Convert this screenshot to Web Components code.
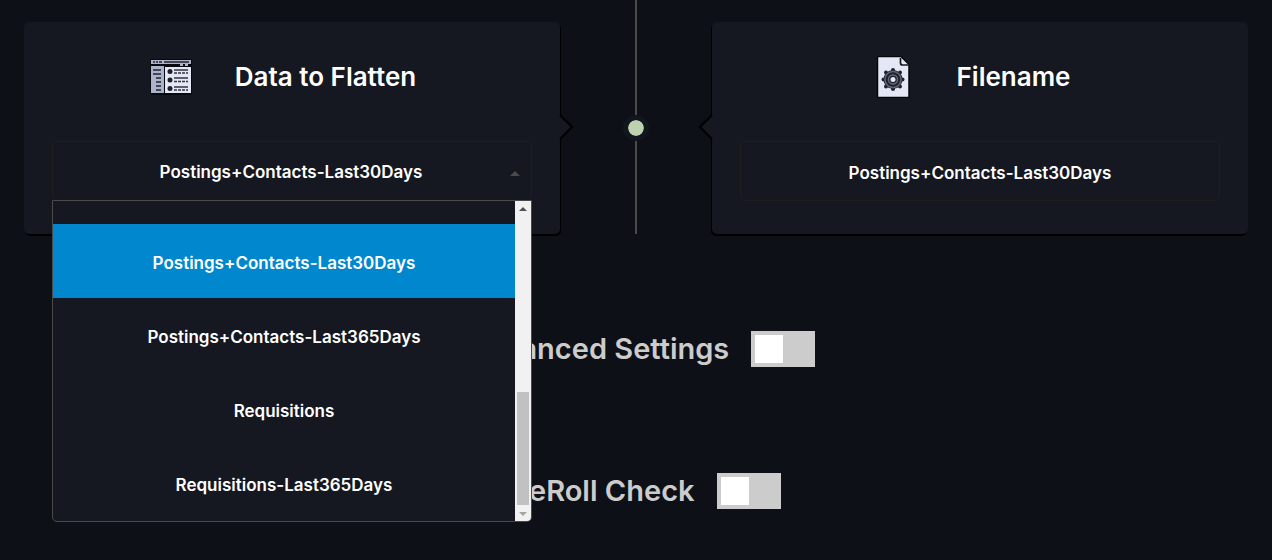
<!DOCTYPE html>
<html lang="en">
<head>
<meta charset="utf-8">
<title>Flatten data</title>
<style>
body { margin: 0; min-height: 100vh; background: #0d1017; color: #fff; font-family: Inter, "Liberation Sans", sans-serif; font-weight: 600; overflow-x: hidden; }
</style>
</head>
<body>
<flatten-page></flatten-page>
<script>
const define = (name, html, setup) => customElements.define(name, class extends HTMLElement {
  constructor() {
    super();
    this.attachShadow({ mode: 'open' }).innerHTML = html;
  }
  connectedCallback() { if (setup) setup(this, this.shadowRoot); }
});

define('columns-icon', `
<style>:host { display: block; width: 42px; height: 42px; } svg { display: block; }</style>
<svg width="42" height="42" viewBox="0 0 42 42" aria-hidden="true">
  <rect x="0" y="3" width="42" height="36" rx="2" fill="#08090e"/>
  <rect x="1" y="4" width="40" height="4" fill="#aeb3c5"/>
  <path d="M3 6h2m1 0h2m1 0h3M14 6h25" stroke="#20222b" stroke-width="1.5"/>
  <path d="M30 9h3m2 0h3" stroke="#aeb3c5" stroke-width="2"/>
  <rect x="1" y="10" width="13" height="27" fill="#aab2cc"/>
  <path d="M15 11h26v26H15z" fill="#e3e7f6"/>
  <path d="M3 14h8M3 18h8M6 22h5M6 26h5M6 30h5M6 34h5" stroke="#20222b" stroke-width="1.5"/>
  <g fill="#20222b"><circle cx="20" cy="15.500" r="2.500"/><circle cx="20" cy="24" r="2.500"/><circle cx="20" cy="32.500" r="2.500"/></g>
  <path d="M24 14h14M24 22h14M24 31h14" stroke="#33353f" stroke-width="1.500"/>
  <path d="M24 17h14M24 25.500h14M24 34h14" stroke="#33353f" stroke-width="1.500" stroke-dasharray="3 1"/>
</svg>`);

define('file-icon', `
<style>:host { display: block; width: 42px; height: 42px; } svg { display: block; }</style>
<svg width="42" height="42" viewBox="0 0 42 42" aria-hidden="true">
  <path d="M5.500 .5H29l8 8V41.500H5.500z" fill="#e4e8f6" stroke="#050609" stroke-width="1.500"/>
  <path d="M28.500 2v5q0 2 2 2h6" fill="none" stroke="#14161d" stroke-width="1.700"/>
  <g fill="#20222b">
    <circle cx="21" cy="23.500" r="9.500"/>
    <circle cx="21" cy="14" r="2"/><circle cx="21" cy="33" r="2"/><circle cx="11.500" cy="23.500" r="2"/><circle cx="30.500" cy="23.500" r="2"/>
    <circle cx="14" cy="16.500" r="2"/><circle cx="28" cy="16.500" r="2"/><circle cx="14" cy="30.500" r="2"/><circle cx="28" cy="30.500" r="2"/>
  </g>
  <circle cx="21" cy="23.500" r="8" fill="none" stroke="#626779" stroke-width="1.500"/>
  <circle cx="21" cy="23.500" r="4.500" fill="none" stroke="#626779" stroke-width="1.500"/>
  <circle cx="21" cy="23.500" r="2.500" fill="#e4e8f6"/>
</svg>`);

define('step-card', `
<style>
  :host { display: block; position: relative; box-sizing: border-box; height: 212px; padding: 32px 28px 0; background: #151820; border-radius: 5px; box-shadow: 1px 2px 0 #000; }
  :host([arrow="left"]) { box-shadow: -1px 2px 0 #000; }
  header { display: flex; align-items: center; justify-content: center; gap: 43px; height: 46px; padding-right: 18px; }
  h2 { margin: 0; font-size: 26px; line-height: 32px; font-weight: 600; }
  .body { padding-top: 41px; }
  .arrow { position: absolute; top: 91px; right: -14px; }
  :host([arrow="left"]) .arrow { right: auto; left: -14px; transform: scaleX(-1); }
</style>
<header><slot name="icon"></slot><h2><slot name="title"></slot></h2></header>
<div class="body"><slot></slot></div>
<svg class="arrow" width="16" height="28" viewBox="0 0 16 28" aria-hidden="true"><path d="M0 2H2L14 14 2 26H0z" fill="#151820"/><path d="M2 2 14 14 2 26" fill="none" stroke="#000" stroke-width="2"/></svg>`);

define('time-line', `
<style>
  :host { display: flex; flex-direction: column; align-items: center; }
  .line { width: 2px; background: #4a4a4a; }
  .top { height: 115px; }
  .bottom { flex: 1; }
  .dot { box-sizing: border-box; width: 26px; height: 26px; border: 5px solid #13161e; border-radius: 50%; background: #bdd3b0; background-clip: padding-box; }
</style>
<div class="line top"></div><div class="dot"></div><div class="line bottom"></div>`);

define('data-select', `
<style>
  :host { display: block; position: relative; }
  select { display: block; box-sizing: border-box; width: 100%; height: 60px; padding: 2px 2px 0 0; appearance: none; border: 1px solid #1f1e1f; border-radius: 5px; background: #151820; color: #fff; font: 600 17px/24px Inter, "Liberation Sans", sans-serif; text-align: center; text-align-last: center; outline: 0; }
  .caret { position: absolute; right: 12px; top: 30px; border: 5px solid transparent; border-top: 0; border-bottom-color: #4a4a4a; }
  .menu { position: absolute; z-index: 2; top: 59px; left: 0; right: 0; box-sizing: border-box; height: 322px; display: flex; border: 1px solid #4a4a4a; border-radius: 0 0 5px 5px; background: #151820; overflow: hidden; }
  ul { flex: 1; margin: 0; padding: 23px 0 0; list-style: none; }
  li { height: 74px; font-size: 17px; line-height: 78px; text-align: center; }
  li[aria-selected="true"] { background: #0087cd; }
  .bar { display: flex; flex-direction: column; align-items: center; width: 16px; background: #f1f1f1; }
  .up, .down { border: 4px solid transparent; }
  .up { margin-top: 6px; border-top: 0; border-bottom-color: #505050; }
  .down { margin: 7px 0 5px; border-bottom: 0; border-top-color: #a3a3a3; }
  .thumb { margin-top: auto; width: 12px; height: 113px; background: #c1c1c1; }
</style>
<select aria-label="Data to Flatten"><option>Postings+Contacts-Last30Days</option><option>Postings+Contacts-Last365Days</option><option>Requisitions</option><option>Requisitions-Last365Days</option></select>
<span class="caret"></span>
<div class="menu">
  <ul role="listbox" aria-label="Data to Flatten"></ul>
  <div class="bar" aria-hidden="true"><span class="up"></span><span class="thumb"></span><span class="down"></span></div>
</div>`, (host, root) => {
  const select = root.querySelector('select');
  const list = root.querySelector('ul');
  const draw = () => list.replaceChildren(...[...select.options].map((option, i) => {
    const item = document.createElement('li');
    item.role = 'option';
    item.textContent = option.text;
    item.setAttribute('aria-selected', i === select.selectedIndex);
    item.onclick = () => { select.selectedIndex = i; draw(); };
    return item;
  }));
  select.onchange = draw;
  draw();
});

define('text-field', `
<style>
  :host { display: block; }
  input { display: block; box-sizing: border-box; width: 100%; height: 60px; padding: 3px 0 0; border: 1px solid #1f1e1f; border-radius: 5px; background: #151820; color: #fff; font: 600 17px/24px Inter, "Liberation Sans", sans-serif; text-align: center; outline: 0; }
</style>
<input type="text" aria-label="Filename" value="Postings+Contacts-Last30Days">`);

define('toggle-row', `
<style>
  :host { display: block; }
  label { display: flex; align-items: center; justify-content: center; gap: 22px; height: 36px; padding-left: 8px; color: #ccc; font-size: 29px; line-height: 38px; }
  input { appearance: none; box-sizing: border-box; width: 64px; height: 36px; margin: 0; padding: 4px; background: #ccc; }
  input::before { content: ""; display: block; width: 28px; height: 28px; background: #fff; }
  input:checked::before { margin-left: auto; }
</style>
<label><slot></slot><input type="checkbox" role="switch"></label>`);

define('flatten-page', `
<style>
  :host { display: block; padding: 0 24px; }
  .steps { display: grid; grid-template-columns: minmax(0, 1fr) 152px minmax(0, 1fr); height: 233px; }
  step-card { margin-top: 22px; }
  .settings { display: grid; gap: 106px; padding-top: 98px; }
</style>
<main>
  <div class="steps">
    <step-card><columns-icon slot="icon"></columns-icon><span slot="title">Data to Flatten</span><data-select></data-select></step-card>
    <time-line></time-line>
    <step-card arrow="left"><file-icon slot="icon"></file-icon><span slot="title">Filename</span><text-field></text-field></step-card>
  </div>
  <div class="settings">
    <toggle-row>Advanced Settings</toggle-row>
    <toggle-row>PreRoll Check</toggle-row>
  </div>
</main>`);
</script>
</body>
</html>
